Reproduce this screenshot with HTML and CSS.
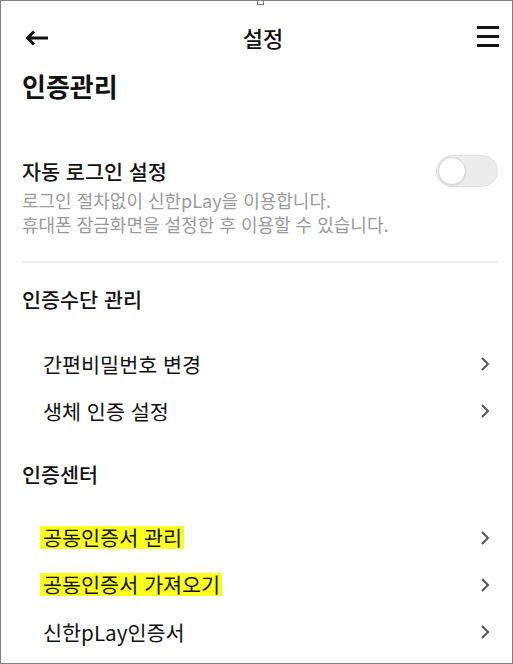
FILE: index.html
```html
<!DOCTYPE html>
<html lang="ko">
<head>
<meta charset="utf-8">
<title>설정</title>
<link rel="stylesheet" href="styles.css">
</head>
<body>
<div class="frame">
  <span class="notch"></span>
  <header class="topbar">
    <svg class="back" width="24" height="16" viewBox="0 0 24 16"><path d="M23 8H3M9 1.5L2.5 8 9 14.5" fill="none" stroke="#111" stroke-width="3"/></svg>
    <div class="title">설정</div>
    <svg class="menu" width="22" height="21" viewBox="0 0 22 21"><path d="M0 1.5H22M0 10.5H22M0 19.5H22" stroke="#111" stroke-width="3"/></svg>
  </header>
  <main class="content">
    <h1 class="page-title">인증관리</h1>

    <section class="auto-login">
      <div class="auto-row">
        <div class="sec-title">자동 로그인 설정</div>
        <div class="toggle"><span class="knob"></span></div>
      </div>
      <p class="desc">로그인 절차없이 신한pLay을 이용합니다.<br>휴대폰 잠금화면을 설정한 후 이용할 수 있습니다.</p>
    </section>

    <hr class="divider">

    <section class="group">
      <div class="sec-title">인증수단 관리</div>
      <ul class="items">
        <li class="item"><span>간편비밀번호 변경</span><svg class="chev" width="10" height="16" viewBox="0 0 10 16"><path d="M2 2l6 6-6 6" fill="none" stroke="#555" stroke-width="2"/></svg></li>
        <li class="item"><span>생체 인증 설정</span><svg class="chev" width="10" height="16" viewBox="0 0 10 16"><path d="M2 2l6 6-6 6" fill="none" stroke="#555" stroke-width="2"/></svg></li>
      </ul>
    </section>

    <section class="group group-2">
      <div class="sec-title">인증센터</div>
      <ul class="items items-2">
        <li class="item"><span class="mark">공동인증서 관리</span><svg class="chev" width="10" height="16" viewBox="0 0 10 16"><path d="M2 2l6 6-6 6" fill="none" stroke="#555" stroke-width="2"/></svg></li>
        <li class="item"><span class="mark">공동인증서 가져오기</span><svg class="chev" width="10" height="16" viewBox="0 0 10 16"><path d="M2 2l6 6-6 6" fill="none" stroke="#555" stroke-width="2"/></svg></li>
        <li class="item"><span>신한pLay인증서</span><svg class="chev" width="10" height="16" viewBox="0 0 10 16"><path d="M2 2l6 6-6 6" fill="none" stroke="#555" stroke-width="2"/></svg></li>
      </ul>
    </section>
  </main>
</div>
</body>
</html>
```

FILE: styles.css
```css
* { box-sizing: border-box; }
html, body { margin: 0; padding: 0; background: #fff; }
body {
  font-family: "Noto Sans CJK KR", "Noto Sans", sans-serif;
  color: #111;
}
.frame {
  position: relative;
  width: 513px;
  height: 664px;
  border: 1px solid #808080;
  overflow: hidden;
}
.notch {
  position: absolute;
  left: 256px;
  top: -1px;
  width: 7px;
  height: 5px;
  border: 1px solid #777;
  border-top: none;
  background: #fff;
}
.topbar {
  height: 72px;
  display: flex;
  align-items: center;
  justify-content: space-between;
  padding: 0 13px 0 24px;
}
.back { display: block; margin-top: 2px; }
.menu { display: block; margin-top: -1px; }
.title {
  font-size: 22px;
  font-weight: 500;
  line-height: 26px;
  margin-left: 0;
}
.content {
  padding: 0 14px 0 21px;
}
.page-title {
  margin: 0;
  font-size: 26px;
  font-weight: 700;
  line-height: 26px;
}
.auto-login { margin-top: 56px; }
.auto-row {
  display: flex;
  align-items: center;
  justify-content: space-between;
  height: 32px;
}
.sec-title {
  font-size: 20.7px;
  font-weight: 500;
  line-height: 28px;
}
.toggle {
  position: relative;
  width: 62px;
  height: 32px;
  border-radius: 16px;
  background: #ececec;
  border: 1px solid #e2e2e2;
}
.knob {
  position: absolute;
  left: 1px;
  top: 1px;
  width: 28px;
  height: 28px;
  border-radius: 50%;
  background: #fff;
  border: 1px solid #d6d6d6;
  box-shadow: 0 1px 2px rgba(0,0,0,0.08);
}
.desc {
  margin: 1px 0 0;
  font-size: 18px;
  line-height: 24px;
  color: #9a9a9a;
}
.divider {
  margin: 25px 0 0;
  border: none;
  height: 2px;
  background: #efefef;
}
.group { margin-top: 22px; }
.group-2 { margin-top: 26px; }
.items {
  list-style: none;
  margin: 27px 0 0;
  padding: 0 8px 0 21px;
}
.items-2 { margin-top: 26px; }
.item {
  height: 47px;
  display: flex;
  align-items: center;
  justify-content: space-between;
  font-size: 20.7px;
  font-weight: 400;
}
.chev { display: block; }
.mark {
  display: inline-block;
  line-height: 23px;
  background: #fcff1e;
  padding: 0 2px 0 3px;
  margin-left: -3px;
}
```
